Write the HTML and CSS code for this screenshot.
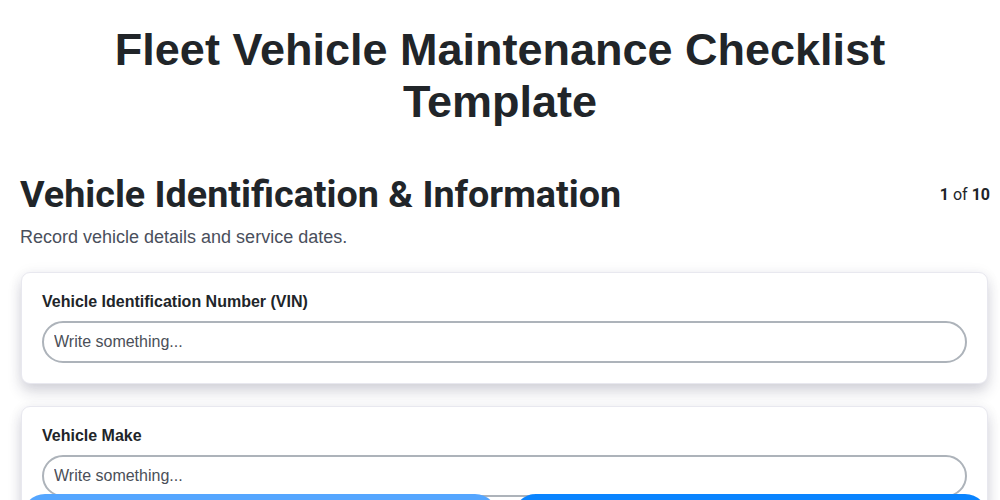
FILE: index.html
```html
<!DOCTYPE html>
<html lang="en">
<head>
    <meta charset="UTF-8">
    <meta name="viewport" content="width=device-width, initial-scale=1.0">
    <title>Fleet Vehicle Maintenance Checklist Template</title>
    <link rel="stylesheet" href="styles.css">
</head>
<body>
    <h1 class="page-title">Fleet Vehicle Maintenance Checklist Template</h1>

    <main class="step">
        <header class="step-header">
            <h2>Vehicle Identification &amp; Information</h2>
            <span class="step-count"><b>1</b> of <b>10</b></span>
        </header>
        <p class="step-desc">Record vehicle details and service dates.</p>

        <section class="field-list">
            <div class="field-card">
                <label for="vin">Vehicle Identification Number (VIN)</label>
                <input type="text" id="vin" placeholder="Write something...">
            </div>
            <div class="field-card">
                <label for="make">Vehicle Make</label>
                <input type="text" id="make" placeholder="Write something...">
            </div>
            <div class="field-card">
                <label for="model">Vehicle Model</label>
                <input type="text" id="model" placeholder="Write something...">
            </div>
        </section>
    </main>

    <!-- 하단 이동 버튼 -->
    <nav class="step-nav">
        <button class="prev-button">Previous</button>
        <button class="next-button">Next</button>
    </nav>
</body>
</html>
```

FILE: styles.css
```css
body {
    font-family: "Liberation Sans", Arial, sans-serif;
    margin: 0;
    padding: 0 0 80px;
    background-color: #fff;
    color: #212529;
}

.page-title {
    margin: 0;
    padding: 24px 20px 0;
    font-size: 45px;
    line-height: 52px;
    text-align: center;
}

.step {
    margin-top: 44px;
    padding: 0 10px 0 20px;
}

.step-header {
    display: flex;
    justify-content: space-between;
    align-items: flex-start;
}

.step-header h2 {
    margin: 0;
    font-family: Roboto, "Liberation Sans", sans-serif;
    font-size: 37.7px;
    line-height: 44px;
    font-weight: 700;
}

.step-count {
    font-family: Roboto, "Liberation Sans", sans-serif;
    font-size: 16px;
    margin-top: 13px;
}

.step-desc {
    margin: 11px 0 24px;
    font-size: 18px;
    color: #4a4f5c;
}

.field-list {
    display: flex;
    flex-direction: column;
    gap: 22px;
}

.field-card {
    display: flex;
    flex-direction: column;
    padding: 20px;
    margin: 0 2px 0 1px;
    background-color: #fff;
    border: 1px solid #e8e8ef;
    border-radius: 9px;
    box-shadow: 0 8px 14px rgba(40, 40, 70, 0.18), 0 0 14px rgba(40, 40, 70, 0.05);
}

.field-card label {
    font-size: 16px;
    line-height: 18px;
    font-weight: 700;
    margin-bottom: 10px;
}

.field-card input {
    height: 42px;
    box-sizing: border-box;
    padding: 0 10px;
    border: 2px solid #adb3ba;
    border-radius: 21px;
    font-family: "Liberation Sans", Arial, sans-serif;
    font-size: 16px;
    color: #212529;
    outline: none;
}

.field-card input::placeholder {
    color: #4b4f58;
}

.step-nav {
    position: fixed;
    left: 22px;
    right: 12px;
    bottom: -40px;
    display: flex;
    gap: 15px;
}

.step-nav button {
    flex: 1;
    height: 46px;
    border: none;
    border-radius: 23px;
    color: #fff;
    font-size: 16px;
    font-weight: 700;
}

.prev-button {
    background-color: #55a6ff;
}

.next-button {
    background-color: #0a84ff;
}
```
